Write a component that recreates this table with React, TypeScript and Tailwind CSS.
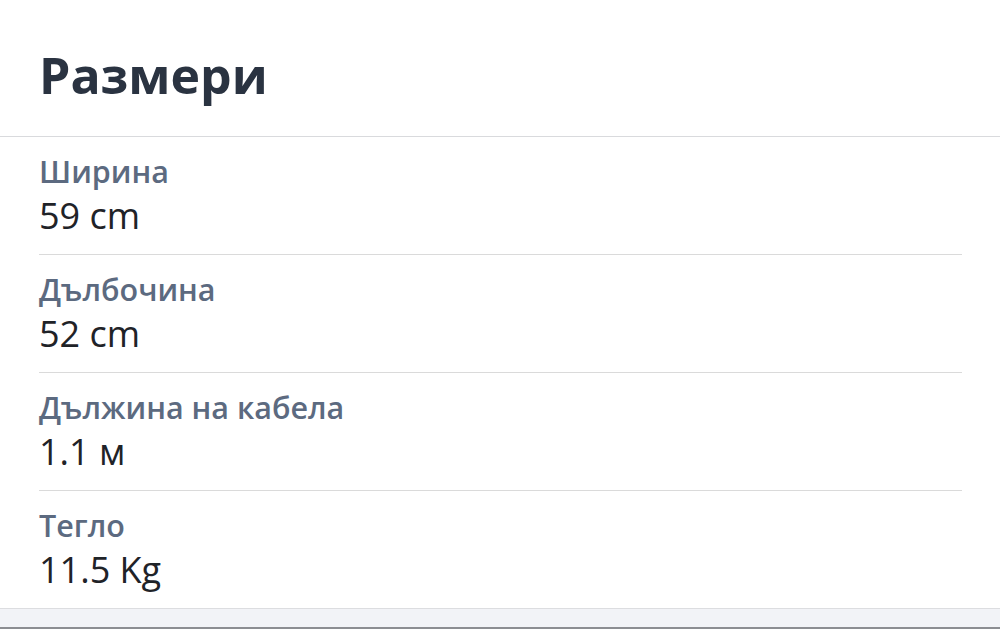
const rows = [
  { label: "Ширина", value: "59 cm" },
  { label: "Дълбочина", value: "52 cm" },
  { label: "Дължина на кабела", value: "1.1 м" },
  { label: "Тегло", value: "11.5 Kg" },
];

export default function App() {
  return (
    <div className="min-h-[629px] bg-white font-['Open_Sans',sans-serif] flex flex-col">
      <div className="px-[39px] pt-[40px] pb-[26px] border-b border-[#d9dadd]">
        <h1 className="text-[50px] leading-[70px] font-bold text-[#2a3341]">Размери</h1>
      </div>
      <div className="pl-[39px] pr-[38px]">
        {rows.map((r, i) => (
          <div
            key={r.label}
            className={`pt-[14px] pb-[15px] ${i < rows.length - 1 ? "border-b border-[#dadada]" : "pb-[14px]"}`}
          >
            <div className="text-[30.5px] leading-[40px] font-semibold text-[#5c6a80]">{r.label}</div>
            <div className="mt-[2px] text-[36px] leading-[46px] font-medium text-[#1f2328]">{r.value}</div>
          </div>
        ))}
      </div>
      <div className="flex-1 border-t border-[#dcdde0] bg-[#f2f3f7] border-b-2 border-b-[#8c8d92]" />
    </div>
  );
}
